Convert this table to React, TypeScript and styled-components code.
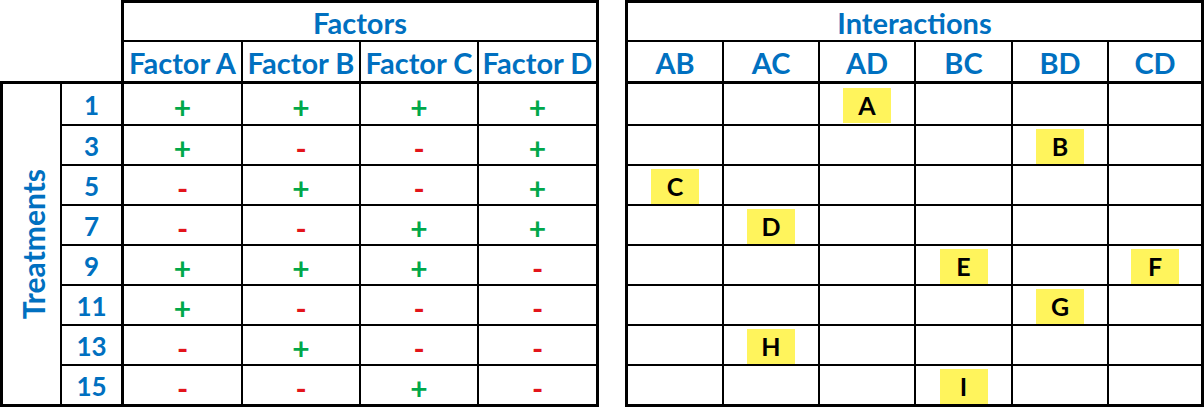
import React from "react";
import styled, { createGlobalStyle } from "styled-components";

const GlobalStyle = createGlobalStyle`
  body {
    margin: 0;
    background: #ffffff;
    font-family: Lato, "Liberation Sans", sans-serif;
  }
  * {
    box-sizing: border-box;
  }
`;

const BLUE = "#0070c0";
const THICK = "3px solid #000";
const THIN = "2px solid #000";

const factorRows: { n: number; signs: string }[] = [
  { n: 1, signs: "++++" },
  { n: 3, signs: "+--+" },
  { n: 5, signs: "-+-+" },
  { n: 7, signs: "--++" },
  { n: 9, signs: "+++-" },
  { n: 11, signs: "+---" },
  { n: 13, signs: "-+--" },
  { n: 15, signs: "--+-" },
];

const interactions = ["AB", "AC", "AD", "BC", "BD", "CD"];

// one entry per treatment row: column index -> letter
const marks: Record<number, string>[] = [
  { 2: "A" },
  { 4: "B" },
  { 0: "C" },
  { 1: "D" },
  { 3: "E", 5: "F" },
  { 4: "G" },
  { 1: "H" },
  { 3: "I" },
];

const Page = styled.div`
  display: flex;
  gap: 26px;
  width: 1204px;
  height: 408px;
`;

const ROWS = "42px 42px 42px repeat(6, 40px) 41px";

const FactorGrid = styled.div`
  display: grid;
  grid-template-columns: 62px 62px 119px 118px 118px 120px;
  grid-template-rows: ${ROWS};
`;

const InteractionGrid = styled.div`
  display: grid;
  grid-template-columns: 99px 96px 96px 97px 96px 95px;
  grid-template-rows: ${ROWS};
`;

const Cell = styled.div<{
  $top?: boolean;
  $left?: boolean;
  $right?: "thin" | "thick" | "none";
  $bottom?: "thin" | "thick" | "none";
}>`
  display: flex;
  align-items: center;
  justify-content: center;
  background: #fff;
  border-top: ${(p) => (p.$top ? THICK : "none")};
  border-left: ${(p) => (p.$left ? THICK : "none")};
  border-right: ${(p) =>
    p.$right === "none" ? "none" : p.$right === "thick" ? THICK : THIN};
  border-bottom: ${(p) =>
    p.$bottom === "none" ? "none" : p.$bottom === "thick" ? THICK : THIN};
`;

const Corner = styled(Cell)`
  grid-column: 1 / span 2;
  grid-row: 1 / span 2;
`;

const GroupTitle = styled(Cell)`
  grid-column: ${(p: { $col: string }) => p.$col};
  font-size: 29px;
  font-weight: 700;
  color: ${BLUE};
  padding-top: 2px;
`;

const ColHead = styled(Cell)`
  font-size: 29px;
  font-weight: 700;
  color: ${BLUE};
  white-space: nowrap;
  padding-top: 1px;
`;

const SideLabel = styled(Cell)`
  grid-column: 1;
  grid-row: 3 / span 8;
`;

const SideText = styled.span`
  writing-mode: vertical-rl;
  transform: rotate(180deg);
  font-size: 30px;
  font-weight: 700;
  color: ${BLUE};
  margin-left: 2px;
`;

const RowNum = styled(Cell)`
  font-size: 26px;
  font-weight: 700;
  color: ${BLUE};
  padding-top: 2px;
`;

const Sign = styled(Cell)<{ $plus: boolean }>`
  font-size: 30px;
  font-weight: 700;
  color: ${(p) => (p.$plus ? "#00a84a" : "#e3141b")};
  padding-top: 5px;
`;

const Mark = styled.span`
  display: flex;
  align-items: center;
  justify-content: center;
  width: 48px;
  height: 35px;
  margin-top: 2px;
  background: #fff45c;
  color: #000;
  font-size: 25px;
  font-weight: 700;
`;

export default function App() {
  const last = factorRows.length - 1;
  return (
    <>
      <GlobalStyle />
      <Page>
        <FactorGrid>
          <Corner $right="thick" $bottom="thick" />
          <GroupTitle $col="3 / span 4" $top $right="thick" $bottom="thin">
            Factors
          </GroupTitle>
          {["A", "B", "C", "D"].map((f, i) => (
            <ColHead key={f} $right={i === 3 ? "thick" : "thin"} $bottom="thick">
              Factor {f}
            </ColHead>
          ))}
          <SideLabel $left $right="thin" $bottom="thick">
            <SideText>Treatments</SideText>
          </SideLabel>
          {factorRows.map((r, ri) => (
            <React.Fragment key={r.n}>
              <RowNum
                style={{ gridColumn: 2 }}
                $right="thick"
                $bottom={ri === last ? "thick" : "thin"}
              >
                {r.n}
              </RowNum>
              {r.signs.split("").map((s, ci) => (
                <Sign
                  key={ci}
                  $plus={s === "+"}
                  $right={ci === 3 ? "thick" : "thin"}
                  $bottom={ri === last ? "thick" : "thin"}
                >
                  {s}
                </Sign>
              ))}
            </React.Fragment>
          ))}
        </FactorGrid>

        <InteractionGrid>
          <GroupTitle $col="1 / span 6" $top $left $right="thick" $bottom="thin">
            Interactions
          </GroupTitle>
          {interactions.map((h, i) => (
            <ColHead
              key={h}
              $left={i === 0}
              $right={i === 5 ? "thick" : "thin"}
              $bottom="thick"
            >
              {h}
            </ColHead>
          ))}
          {marks.map((row, ri) =>
            interactions.map((h, ci) => (
              <Cell
                key={`${ri}-${h}`}
                $left={ci === 0}
                $right={ci === 5 ? "thick" : "thin"}
                $bottom={ri === last ? "thick" : "thin"}
              >
                {row[ci] && <Mark>{row[ci]}</Mark>}
              </Cell>
            ))
          )}
        </InteractionGrid>
      </Page>
    </>
  );
}
